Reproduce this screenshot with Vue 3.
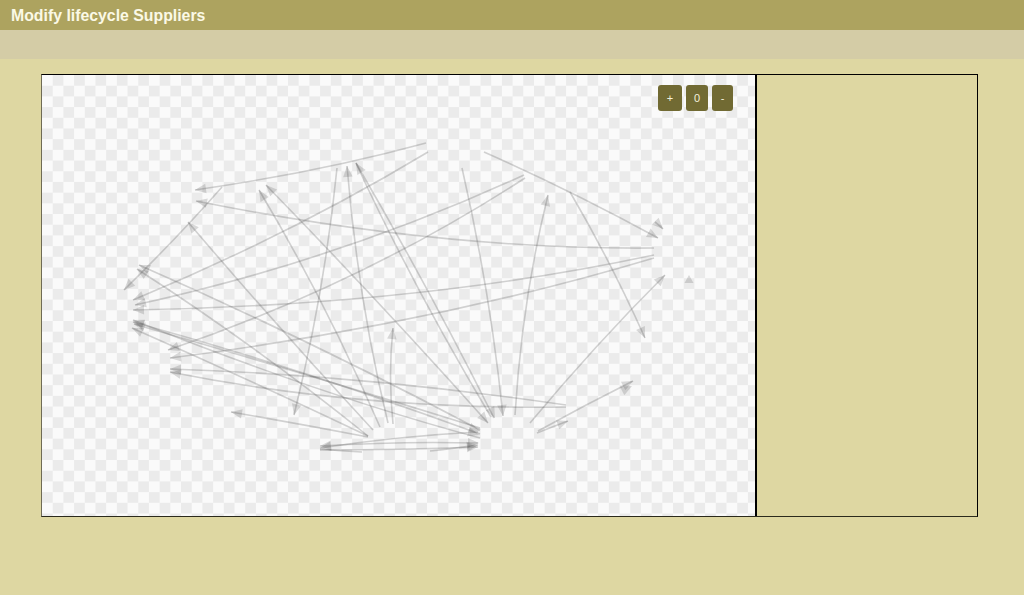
<script setup>
const raw = [
  [426,143,320,172,195,190],[428,152,290,235,133,300],[524,175,340,260,135,305],[525,178,360,285,168,350],
  [654,248,440,250,196,201],[654,255,420,305,133,310],[654,258,430,325,170,358],[222,187,180,235,124,290],
  [484,152,570,190,658,238],[570,192,610,260,645,338],[530,423,595,345,665,275],[538,431,585,405,633,381],
  [537,433,552,427,568,421],[515,415,522,300,548,195],[462,168,490,290,503,416],[337,168,325,290,294,415],
  [388,423,358,300,347,166],[380,427,325,300,259,190],[488,423,378,300,266,185],[494,418,430,290,356,163],
  [491,417,412,285,356,163,1],[393,424,388,375,393,328],[373,430,280,330,188,222],[368,437,300,424,231,412],
  [368,436,255,345,137,269],[480,430,310,340,139,265],[480,434,300,368,133,322],[480,428,300,372,134,324],
  [368,436,250,380,132,328],[566,405,360,375,170,369],[566,407,360,410,170,372],[480,438,320,395,133,320],
  [478,443,400,441,320,446],[478,432,400,436,320,448],[320,450,400,450,478,447],[430,451,450,449,478,445],
  [320,449,340,451,362,452,1],[655,222,659,225,663,229],
];
const extraHeads = [
  [480,431,300,370],[479,435,300,380],[479,443,320,441],[495,418,430,290],
  [488,423,380,300],[632,386,600,402],
];
function head(x, y, cx, cy) {
  const len = Math.hypot(x - cx, y - cy) || 1;
  const ux = (x - cx) / len, uy = (y - cy) / len;
  const bx = x - ux * 11, by = y - uy * 11;
  const nx = -uy * 4.8, ny = ux * 4.8;
  return `${x},${y} ${bx + nx},${by + ny} ${bx - nx},${by - ny}`;
}
const edges = raw.map(([a, b, c, d, e, f]) => ({ d: `M${a} ${b}Q${c} ${d} ${e} ${f}` }));
const heads = [
  ...raw.filter((r) => !r[6]).map(([, , c, d, e, f]) => head(e, f, c, d)),
  ...extraHeads.map(([x, y, cx, cy]) => head(x, y, cx, cy)),
  '689,275 693.5,283 684.5,283',
];
const buttons = ['+', '0', '-'];
</script>

<template>
  <div class="page">
    <header class="title">Modify lifecycle Suppliers</header>
    <div class="toolbar"></div>
    <main class="frame">
      <section class="canvas">
        <svg class="graph" width="713" height="441" viewBox="42 75 713 441">
          <path v-for="(e, i) in edges" :key="i" class="edge" :d="e.d" />
          <polygon v-for="(h, i) in heads" :key="'h' + i" class="arrow" :points="h" />
        </svg>
        <div class="zoom">
          <button v-for="b in buttons" :key="b" class="zoom-btn" type="button">{{ b }}</button>
        </div>
      </section>
      <aside class="side"></aside>
    </main>
  </div>
</template>

<style scoped>
.page {
  height: 595px;
  overflow: hidden;
  background: #ded7a2;
  font-family: "Liberation Sans", Arial, sans-serif;
}
.title {
  height: 30px;
  box-sizing: border-box;
  padding: 6px 0 0 11px;
  background: #ada35f;
  color: #fbf9e6;
  font-size: 15.84px;
  font-weight: 700;
  line-height: 19px;
}
.toolbar {
  height: 29px;
  background: #d4cca6;
}
.frame {
  display: flex;
  height: 443px;
  margin: 15px 46px 0 41px;
  box-sizing: border-box;
  border: 1px solid #000;
  border-left-color: #6f6b55;
  border-bottom-color: #2b2a1c;
}
.canvas {
  position: relative;
  width: 713px;
  flex: none;
  overflow: hidden;
  background-color: #fafafa;
  background-image: conic-gradient(#ebebeb 25%, transparent 0 50%, #ebebeb 0 75%, transparent 0);
  background-size: 21.4px 21.4px;
}
.graph {
  display: block;
  filter: blur(0.35px);
}
.edge {
  fill: none;
  stroke: rgba(60, 60, 60, 0.22);
  stroke-width: 1.6;
}
.arrow {
  fill: rgba(60, 60, 60, 0.18);
}
.zoom {
  position: absolute;
  top: 10px;
  right: 22px;
  display: flex;
  gap: 4px;
}
.zoom-btn {
  width: 21px;
  height: 26px;
  padding: 0;
  border: 0;
  border-radius: 3px;
  background: #716a33;
  color: #f3f0da;
  font-family: "Liberation Sans", Arial, sans-serif;
  font-size: 11px;
}
.zoom-btn:nth-child(1) {
  width: 24px;
}
.zoom-btn:nth-child(2) {
  width: 22px;
}
.side {
  flex: 1;
  border-left: 2px solid #000;
}
</style>
